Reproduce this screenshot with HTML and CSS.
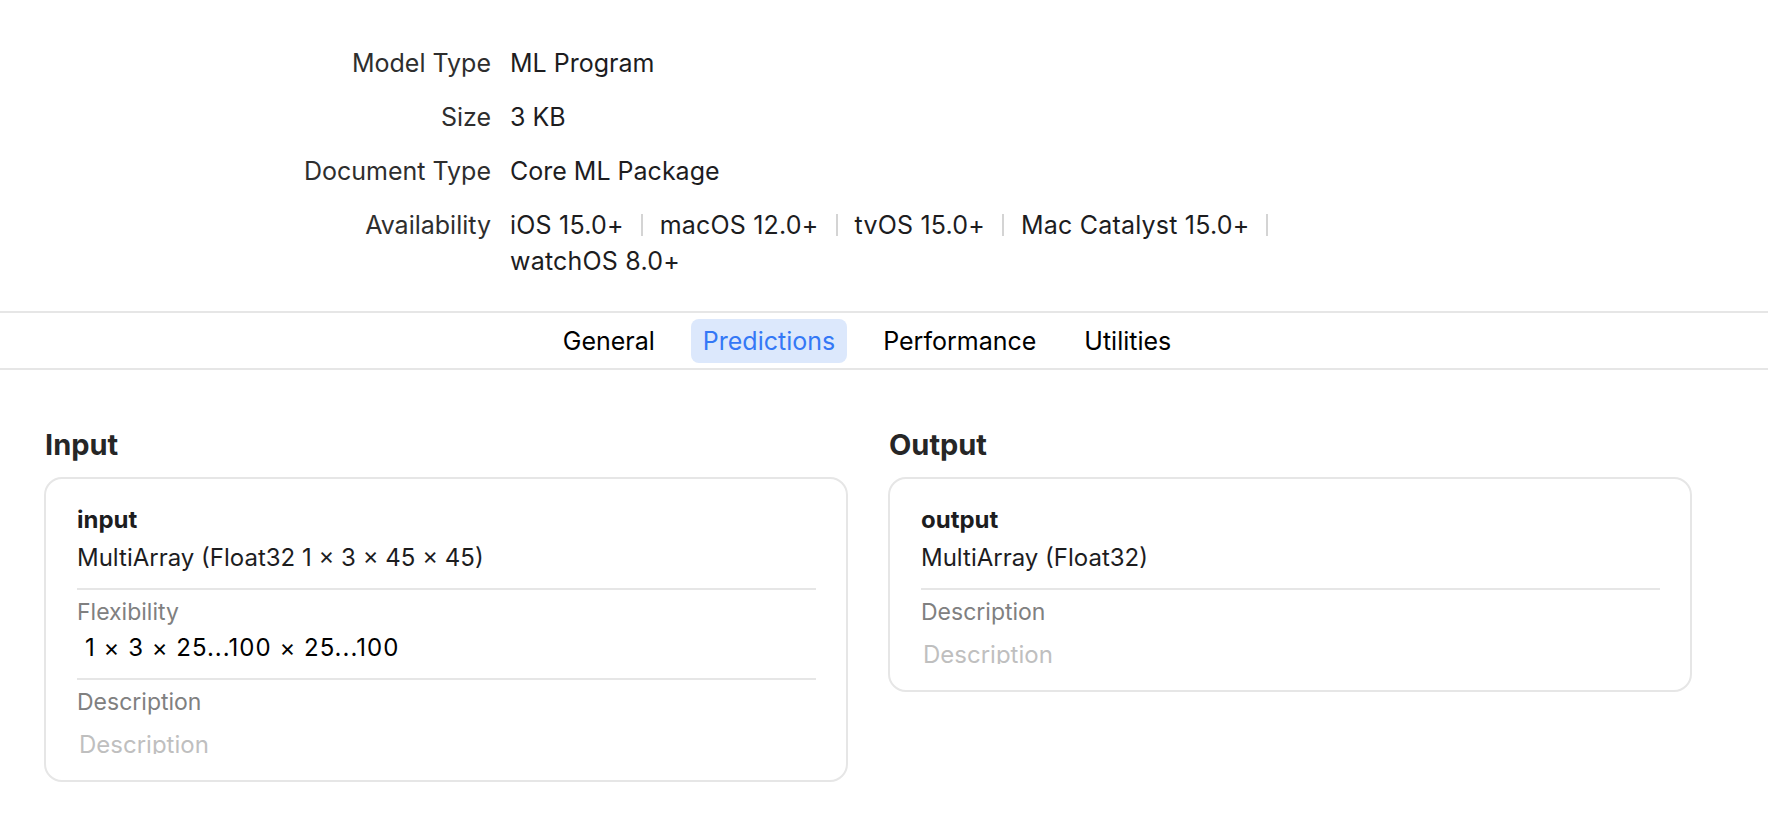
FILE: index.html
```html
<html>
<head>
    <title>Model Predictions</title>
    <link rel="stylesheet" href="styles.css">
</head>

<body>
    <div class="summary">
        <span class="label">Model Type</span>
        <span class="value">ML Program</span>

        <span class="label">Size</span>
        <span class="value">3 KB</span>

        <span class="label">Document Type</span>
        <span class="value">Core ML Package</span>

        <span class="label">Availability</span>
        <span class="value platforms">
            <span>iOS 15.0+</span><i class="sep"></i>
            <span>macOS 12.0+</span><i class="sep"></i>
            <span>tvOS 15.0+</span><i class="sep"></i>
            <span>Mac Catalyst 15.0+</span><i class="sep"></i>
            <span>watchOS 8.0+</span>
        </span>
    </div>

    <div class="tabs">
        <span class="tab">General</span>
        <span class="tab active">Predictions</span>
        <span class="tab">Performance</span>
        <span class="tab">Utilities</span>
    </div>

    <div class="io">
        <div class="panel">
            <h2>Input</h2>
            <div class="card">
                <div class="name">input</div>
                <div class="type">MultiArray (Float32 1 × 3 × 45 × 45)</div>
                <div class="divider"></div>
                <div class="field-label">Flexibility</div>
                <div class="field-value">1 × 3 × 25...100 × 25...100</div>
                <div class="divider"></div>
                <div class="field-label">Description</div>
                <div class="placeholder">Description</div>
            </div>
        </div>

        <div class="panel">
            <h2>Output</h2>
            <div class="card">
                <div class="name">output</div>
                <div class="type">MultiArray (Float32)</div>
                <div class="divider"></div>
                <div class="field-label">Description</div>
                <div class="placeholder">Description</div>
            </div>
        </div>
    </div>
</body>
</html>
```

FILE: styles.css
```css
body {
    margin: 0;
    font-family: "Inter", "Liberation Sans", sans-serif;
    font-size: 24px;
    color: #1d1d1f;
    background: #fff;
}

/* top summary */
.summary {
    display: grid;
    grid-template-columns: 491px 800px;
    column-gap: 19px;
    row-gap: 18px;
    padding: 45px 0 32px;
    font-size: 25px;
    line-height: 36px;
}
.label {
    text-align: right;
    color: #2e2e2e;
}
.value {
    color: #1d1d1f;
}
.platforms {
    display: flex;
    flex-wrap: wrap;
    align-items: baseline;
    letter-spacing: 0.2px;
}
.sep {
    display: inline-block;
    width: 2px;
    height: 22px;
    margin: 0 17px;
    background: #d4d4d4;
    align-self: center;
}

/* tab bar */
.tabs {
    display: flex;
    justify-content: center;
    gap: 24px;
    padding: 6px 34px 5px 0;
    border-top: 2px solid #e6e6e6;
    border-bottom: 2px solid #e6e6e6;
    font-size: 25px;
}
.tab {
    height: 44px;
    line-height: 44px;
    padding: 0 12px;
    border-radius: 8px;
    color: #000;
}
.tab.active {
    background: #dce8fc;
    color: #3478f6;
}

/* input / output */
.io {
    display: grid;
    grid-template-columns: 804px 804px;
    column-gap: 40px;
    align-items: start;
    padding: 58px 44px 0;
}
h2 {
    margin: 0 0 15px 1px;
    font-size: 29px;
    line-height: 34px;
    font-weight: 700;
    color: #262626;
}
.card {
    border: 2px solid #e6e6e6;
    border-radius: 18px;
    padding: 22px 30px 26px 31px;
}
.name {
    font-weight: 700;
    line-height: 38px;
}
.type {
    line-height: 38px;
}
.divider {
    height: 2px;
    margin-top: 11px;
    background: #e6e6e6;
}
.field-label {
    margin-top: 7px;
    font-size: 23px;
    line-height: 30px;
    color: #808080;
}
.field-value {
    margin-top: 2px;
    padding-left: 8px;
    line-height: 38px;
    letter-spacing: 1px;
    color: #000;
}
.placeholder {
    margin-top: 13px;
    padding-left: 2px;
    height: 24px;
    overflow: hidden;
    line-height: 30px;
    color: #bfbfbf;
}
```
